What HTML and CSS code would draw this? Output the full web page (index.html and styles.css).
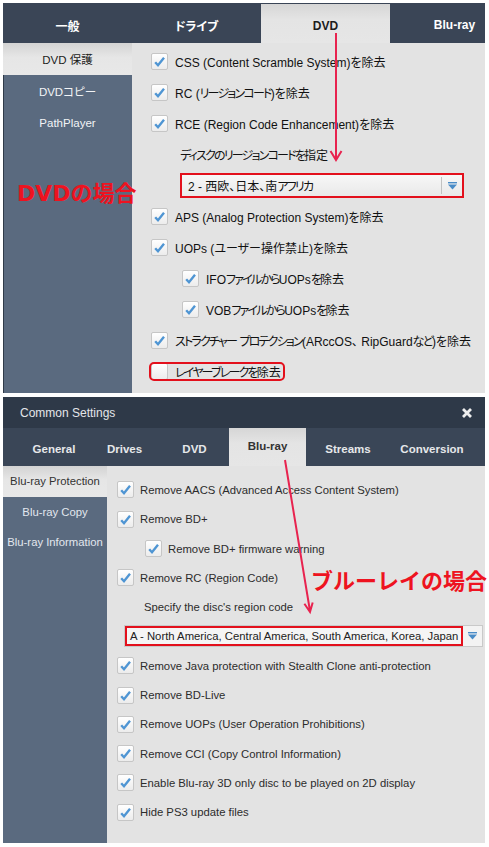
FILE: index.html
```html
<!DOCTYPE html>
<html lang="ja">
<head>
<meta charset="utf-8">
<title>DVD / Blu-ray settings</title>
<link rel="stylesheet" href="styles.css">
</head>
<body>
<div class="page">
  <section class="panel panel-dvd">
    <nav class="tabs tabs-dvd">
      <div class="tab">一般</div>
      <div class="tab">ドライブ</div>
      <div class="tab active">DVD</div>
      <div class="tab">Blu-ray</div>
    </nav>
    <div class="body">
      <aside class="side side-dvd">
        <div class="side-item active">DVD 保護</div>
        <div class="side-item">DVDコピー</div>
        <div class="side-item">PathPlayer</div>
      </aside>
      <div class="content content-dvd">
        <div class="row"><span class="cb"><svg viewBox="0 0 13 13"><path d="M2.2 7.2 L5 10.2 L11 2.8"/></svg></span><span>CSS (Content Scramble System)を除去</span></div>
        <div class="row"><span class="cb"><svg viewBox="0 0 13 13"><path d="M2.2 7.2 L5 10.2 L11 2.8"/></svg></span><span>RC (<span class="kana">リージョンコード</span>)を除去</span></div>
        <div class="row"><span class="cb"><svg viewBox="0 0 13 13"><path d="M2.2 7.2 L5 10.2 L11 2.8"/></svg></span><span>RCE (Region Code Enhancement)を除去</span></div>
        <div class="row ind-label"><span class="kana">ディスクのリージョンコードを</span>指定</div>
        <div class="row ind-label">
          <div class="select select-dvd">
            <span class="select-text">2 - 西欧、日本、南<span class="kana">アフリカ</span></span>
            <span class="select-btn"><svg viewBox="0 0 9 8"><rect x="0" y="0" width="9" height="1.4"/><polygon points="0,2.6 9,2.6 4.5,7.6"/></svg></span>
          </div>
        </div>
        <div class="row"><span class="cb"><svg viewBox="0 0 13 13"><path d="M2.2 7.2 L5 10.2 L11 2.8"/></svg></span><span>APS (Analog Protection System)を除去</span></div>
        <div class="row"><span class="cb"><svg viewBox="0 0 13 13"><path d="M2.2 7.2 L5 10.2 L11 2.8"/></svg></span><span>UOPs (ユーザー操作禁止)を除去</span></div>
        <div class="row ind-sub"><span class="cb"><svg viewBox="0 0 13 13"><path d="M2.2 7.2 L5 10.2 L11 2.8"/></svg></span><span>IFO<span class="kana">ファイルから</span>UOPs<span class="kana">を</span>除去</span></div>
        <div class="row ind-sub"><span class="cb"><svg viewBox="0 0 13 13"><path d="M2.2 7.2 L5 10.2 L11 2.8"/></svg></span><span>VOB<span class="kana">ファイルから</span>UOPs<span class="kana">を</span>除去</span></div>
        <div class="row"><span class="cb"><svg viewBox="0 0 13 13"><path d="M2.2 7.2 L5 10.2 L11 2.8"/></svg></span><span><span class="kana">ストラクチャー</span> <span class="kana">プロテクション</span>(ARccOS、 RipGuard<span class="kana">など</span>)を除去</span></div>
        <div class="row"><span class="outlined"><span class="cb"></span><span><span class="kana">レイヤーブレークを</span>除去</span></span></div>
      </div>
    </div>
  </section>

  <section class="panel panel-br">
    <header class="titlebar">
      <span>Common Settings</span>
      <svg class="close" viewBox="0 0 10 10"><path d="M1 1 L9 9 M9 1 L1 9"/></svg>
    </header>
    <nav class="tabs tabs-br">
      <div class="tab">General</div>
      <div class="tab">Drives</div>
      <div class="tab">DVD</div>
      <div class="tab active">Blu-ray</div>
      <div class="tab">Streams</div>
      <div class="tab">Conversion</div>
    </nav>
    <div class="body">
      <aside class="side side-br">
        <div class="side-item active">Blu-ray Protection</div>
        <div class="side-item">Blu-ray Copy</div>
        <div class="side-item">Blu-ray Information</div>
      </aside>
      <div class="content content-br">
        <div class="row"><span class="cb"><svg viewBox="0 0 13 13"><path d="M2.2 7.2 L5 10.2 L11 2.8"/></svg></span><span>Remove AACS (Advanced Access Content System)</span></div>
        <div class="row"><span class="cb"><svg viewBox="0 0 13 13"><path d="M2.2 7.2 L5 10.2 L11 2.8"/></svg></span><span>Remove BD+</span></div>
        <div class="row br-sub"><span class="cb"><svg viewBox="0 0 13 13"><path d="M2.2 7.2 L5 10.2 L11 2.8"/></svg></span><span>Remove BD+ firmware warning</span></div>
        <div class="row"><span class="cb"><svg viewBox="0 0 13 13"><path d="M2.2 7.2 L5 10.2 L11 2.8"/></svg></span><span>Remove RC (Region Code)</span></div>
        <div class="row br-label">Specify the disc's region code</div>
        <div class="row br-select-row">
          <div class="select select-br">
            <span class="select-text">A - North America, Central America, South America, Korea, Japan</span>
            <span class="select-btn"><svg viewBox="0 0 9 8"><rect x="0" y="0" width="9" height="1.4"/><polygon points="0,2.6 9,2.6 4.5,7.6"/></svg></span>
          </div>
        </div>
        <div class="row"><span class="cb"><svg viewBox="0 0 13 13"><path d="M2.2 7.2 L5 10.2 L11 2.8"/></svg></span><span>Remove Java protection with Stealth Clone anti-protection</span></div>
        <div class="row"><span class="cb"><svg viewBox="0 0 13 13"><path d="M2.2 7.2 L5 10.2 L11 2.8"/></svg></span><span>Remove BD-Live</span></div>
        <div class="row"><span class="cb"><svg viewBox="0 0 13 13"><path d="M2.2 7.2 L5 10.2 L11 2.8"/></svg></span><span>Remove UOPs (User Operation Prohibitions)</span></div>
        <div class="row"><span class="cb"><svg viewBox="0 0 13 13"><path d="M2.2 7.2 L5 10.2 L11 2.8"/></svg></span><span>Remove CCI (Copy Control Information)</span></div>
        <div class="row"><span class="cb"><svg viewBox="0 0 13 13"><path d="M2.2 7.2 L5 10.2 L11 2.8"/></svg></span><span>Enable Blu-ray 3D only disc to be played on 2D display</span></div>
        <div class="row"><span class="cb"><svg viewBox="0 0 13 13"><path d="M2.2 7.2 L5 10.2 L11 2.8"/></svg></span><span>Hide PS3 update files</span></div>
      </div>
    </div>
  </section>

  <svg class="arrows" viewBox="0 0 489 847">
    <path d="M336 33 L336 159 M330.5 151 L336 160 L341.5 151"/>
    <path d="M285 460 L310 611 M304.4 603.8 L310 612 L312.7 602.4"/>
  </svg>
  <div class="note note-dvd">DVDの場合</div>
  <div class="note note-br">ブルーレイの場合</div>
</div>
</body>
</html>
```

FILE: styles.css
```css
html, body {
  margin: 0;
  padding: 0;
  background: #ffffff;
}

body {
  font-family: "Liberation Sans", Arial, "Noto Sans CJK JP", sans-serif;
  font-feature-settings: "palt";
}

.page {
  position: relative;
  width: 489px;
  height: 847px;
  overflow: hidden;
}

.panel {
  margin-left: 3px;
  width: 482px;
  overflow: hidden;
  display: flex;
  flex-direction: column;
}

.panel-dvd {
  margin-top: 3px;
  height: 390px;
}

.panel-br {
  margin-top: 4px;
  height: 446px;
}

/* tabs */
.tabs {
  display: flex;
  flex-shrink: 0;
}

.tab {
  display: flex;
  align-items: center;
  justify-content: center;
  flex-shrink: 0;
  box-sizing: border-box;
  font-weight: bold;
  white-space: nowrap;
}

.tabs-dvd {
  height: 40px;
  background: #3a4556;
}

.tabs-dvd .tab {
  width: 129px;
  color: #ffffff;
  font-size: 12px;
  padding-top: 4px;
}

.tabs-dvd .tab.active {
  margin-top: 1px;
}

.tab.active {
  background: linear-gradient(#d6d6d6, #e4e4e4 40%, #e6e6e6);
  color: #1c1c1c;
}

.titlebar {
  height: 31px;
  flex-shrink: 0;
  background: #2e3948;
  display: flex;
  align-items: center;
  justify-content: space-between;
  padding: 0 13px 0 17px;
  color: #e4e6ea;
  font-size: 12px;
}

.close {
  width: 10px;
  height: 10px;
  fill: none;
  stroke: #eeeeee;
  stroke-width: 2.8;
}

.tabs-br {
  height: 38px;
  background: #3a4657;
  padding-left: 16px;
}

.tabs-br .tab {
  color: #e6e8ea;
  font-size: 11.5px;
  padding-top: 3px;
}

.tabs-br .tab.active {
  color: #333333;
  padding-top: 0;
  padding-bottom: 2px;
}

.tabs-br .tab:nth-child(1) { width: 70px; }
.tabs-br .tab:nth-child(2) { width: 71px; }
.tabs-br .tab:nth-child(3) { width: 69px; }
.tabs-br .tab:nth-child(4) { width: 77px; }
.tabs-br .tab:nth-child(5) { width: 84px; }
.tabs-br .tab:nth-child(6) { width: 84px; }

/* body */
.body {
  display: flex;
  flex: 1;
  min-height: 0;
}

.side {
  flex-shrink: 0;
  background: #5a6a7f;
}

.side-dvd {
  width: 129px;
  box-shadow: inset 1px 0 0 #2f3a48;
}

.side-br {
  width: 104px;
}

.side-item {
  display: flex;
  align-items: center;
  justify-content: center;
  color: #f2f4f6;
  white-space: nowrap;
}

.side-dvd .side-item {
  height: 32px;
  font-size: 11.5px;
}

.side-br .side-item {
  height: 30.5px;
  font-size: 11.3px;
  color: #e2e7ee;
}

.side-item.active {
  background: linear-gradient(#d3d3d3, #e6e6e6 45%, #e8e8e8);
  color: #1c1c1c;
}

.side-br .side-item.active {
  color: #333333;
}

.content {
  flex: 1;
  background: #e3e3e3;
}

.content-dvd {
  padding: 3px 0 0 19px;
}

.content-br {
  padding: 9.35px 0 0 10px;
}

.row {
  display: flex;
  align-items: center;
  white-space: pre;
}

.content-dvd .row {
  height: 31px;
  font-size: 12px;
  color: #111111;
}

.content-br .row {
  height: 29.3px;
  font-size: 11.3px;
  color: #2c2c2c;
}

/* narrower kana, as in the original UI font */
.kana {
  letter-spacing: -1.8px;
}

/* checkbox */
.cb {
  width: 17px;
  height: 17px;
  box-sizing: border-box;
  border: 1px solid #c6c6c6;
  border-radius: 2px;
  background: linear-gradient(#ffffff, #ececec);
  display: flex;
  align-items: center;
  justify-content: center;
  flex-shrink: 0;
  margin-right: 7px;
}

.content-br .cb {
  margin-right: 6px;
}

.cb svg {
  width: 13px;
  height: 13px;
  fill: none;
  stroke: #4f95d3;
  stroke-width: 2.4;
  stroke-linejoin: miter;
}

.ind-label {
  padding-left: 29px;
}

.ind-sub {
  padding-left: 31px;
}

.br-sub {
  padding-left: 28px;
}

.br-label {
  padding-left: 27px;
}

.br-select-row {
  padding-left: 7px;
}

/* outlined item */
.outlined {
  position: relative;
  display: flex;
  align-items: center;
  padding-right: 4px;
}

.outlined::after {
  content: "";
  position: absolute;
  left: -2px;
  right: 0;
  top: -1px;
  bottom: -1px;
  border: 2px solid #e3101c;
  border-radius: 5px;
}

/* select */
.select {
  display: flex;
  align-items: stretch;
  box-sizing: border-box;
}

.select-dvd {
  width: 284px;
  height: 25px;
  border: 2px solid #e3101c;
  background: linear-gradient(#f7f7f7, #e9e9e9);
}

.select-text {
  flex: 1;
  display: flex;
  align-items: center;
  overflow: hidden;
  white-space: pre;
}

.select-dvd .select-text {
  padding-left: 6px;
}

.select-btn {
  width: 20px;
  flex-shrink: 0;
  display: flex;
  align-items: center;
  justify-content: center;
}

.select-dvd .select-btn {
  border-left: 1px solid #c2c2c2;
  margin: 2px 0;
}

.select-btn svg {
  width: 9px;
  height: 8px;
  fill: #4a8cc7;
}

.select-br {
  width: 359px;
  height: 22px;
  border: 1px solid #c9c9c9;
  background: #f3f3f3;
}

.select-br .select-text {
  border: 2px solid #e3101c;
  padding-left: 3px;
  background: #f5f5f5;
  color: #222222;
}

.select-br .select-btn {
  width: 19px;
}

/* annotations */
.arrows {
  position: absolute;
  left: 0;
  top: 0;
  width: 489px;
  height: 847px;
  pointer-events: none;
  fill: none;
  stroke: #e8234f;
  stroke-width: 2;
}

.note {
  position: absolute;
  font-family: "DejaVu Sans", "Noto Sans CJK JP", sans-serif;
  font-feature-settings: normal;
  font-weight: bold;
  font-size: 22px;
  line-height: 24px;
  color: #ee1320;
  white-space: nowrap;
}

.note-dvd {
  left: 17px;
  top: 182px;
}

.note-br {
  left: 311px;
  top: 570px;
}
```
